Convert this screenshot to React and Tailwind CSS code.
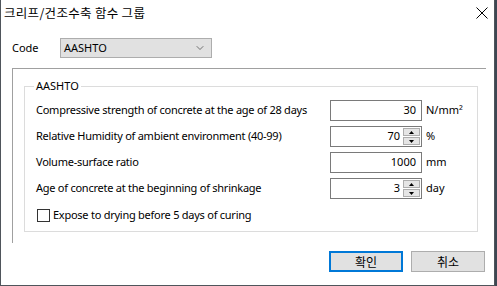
import { ChevronDown } from 'lucide-react'

const font = { fontFamily: '"Noto Sans", "Noto Sans CJK KR", sans-serif' }
const kr = { fontFamily: '"Noto Sans CJK KR", sans-serif' }

function Spinner() {
    return (
        <div className="flex flex-col w-[17px] h-[17px] mr-[1px] gap-[1px]">
            <div className="flex-1 flex items-center justify-center bg-[#e5e5e5] border border-[#adadad]">
                <svg width="5" height="3" viewBox="0 0 5 3"><path d="M2.5 0L5 3H0z" fill="#000" /></svg>
            </div>
            <div className="flex-1 flex items-center justify-center bg-[#e5e5e5] border border-[#adadad]">
                <svg width="5" height="3" viewBox="0 0 5 3"><path d="M0 0H5L2.5 3z" fill="#000" /></svg>
            </div>
        </div>
    )
}

function Row({ label, value, unit, spin }) {
    return (
        <div className="flex items-center h-[21px]">
            <div className="w-[305px] pl-[11px] text-[11px] tracking-[-0.25px] text-black whitespace-nowrap">{label}</div>
            <div className="w-[92px] h-[21px] border border-[#7a7a7a] bg-white flex items-center justify-end">
                <span className={`text-[11px] text-black ${spin ? 'mr-[3px]' : 'mr-[5px]'}`}>{value}</span>
                {spin && <Spinner />}
            </div>
            <div className="ml-[4px] text-[11px] text-black whitespace-nowrap">{unit}</div>
        </div>
    )
}

export default function App() {
    return (
        <div className="w-[497px] h-[286px] bg-[#3d4752] flex overflow-hidden" style={font}>
            <div className="w-[495px] h-[286px] bg-white border-l border-r border-b border-[#4f555b] flex flex-col">
                {/* Title bar */}
                <div className="h-[30px] flex items-center justify-between pl-[3px] pr-[6px] pb-[4px]">
                    <span className="text-[12.5px] text-black tracking-[0.3px]" style={kr}>
                        크리프/건조수축 함수 그룹
                    </span>
                    <svg width="12" height="12" viewBox="0 0 12 12">
                        <path d="M0.5 0.5L11.5 11.5M11.5 0.5L0.5 11.5" stroke="#000" strokeWidth="1" />
                    </svg>
                </div>

                {/* Code select */}
                <div className="flex items-center mt-[8px] ml-[11px] h-[20px]">
                    <span className="w-[48px] text-[11px] text-black">Code</span>
                    <div className="w-[152px] h-[20px] bg-[#e1e1e1] border border-[#adadad] flex items-center justify-between pl-[3px] pr-[5px]">
                        <span className="text-[11px] text-black">AASHTO</span>
                        <ChevronDown size={12} strokeWidth={1.3} color="#333" />
                    </div>
                </div>

                {/* Outer frame */}
                <div className="mt-[10px] ml-[11px] w-[474px] h-[175px] border-t border-l border-[#a0a0a0] pt-[17px] pl-[11px]">
                    {/* Group box */}
                    <div className="relative w-[454px] h-[146px] border border-[#dcdcdc] pt-[13px] flex flex-col gap-[5px]">
                        <span className="absolute left-[9px] top-[-9px] bg-white px-[2px] text-[11px] text-black leading-[16px]">AASHTO</span>
                        <Row label="Compressive strength of concrete at the age of 28 days" value="30" unit="N/mm²" />
                        <Row label="Relative Humidity of ambient environment (40-99)" value="70" unit="%" spin />
                        <Row label="Volume-surface ratio" value="1000" unit="mm" />
                        <Row label="Age of concrete at the beginning of shrinkage" value="3" unit="day" spin />
                        <div className="flex items-center ml-[12px] mt-[3px]">
                            <div className="w-[13px] h-[13px] border border-[#333] bg-white" />
                            <span className="ml-[3px] text-[11px] tracking-[-0.25px] text-black">Expose to drying before 5 days of curing</span>
                        </div>
                    </div>
                </div>

                {/* Buttons */}
                <div className="flex justify-end gap-[8px] mt-[8px] mr-[9px]">
                    <button className="w-[74px] h-[21px] bg-[#e1e1e1] border-2 border-[#0078d7] text-[12px] text-black flex items-center justify-center" style={kr}>
                        확인
                    </button>
                    <button className="w-[74px] h-[21px] bg-[#e1e1e1] border border-[#adadad] text-[12px] text-black flex items-center justify-center" style={kr}>
                        취소
                    </button>
                </div>
            </div>
        </div>
    )
}
